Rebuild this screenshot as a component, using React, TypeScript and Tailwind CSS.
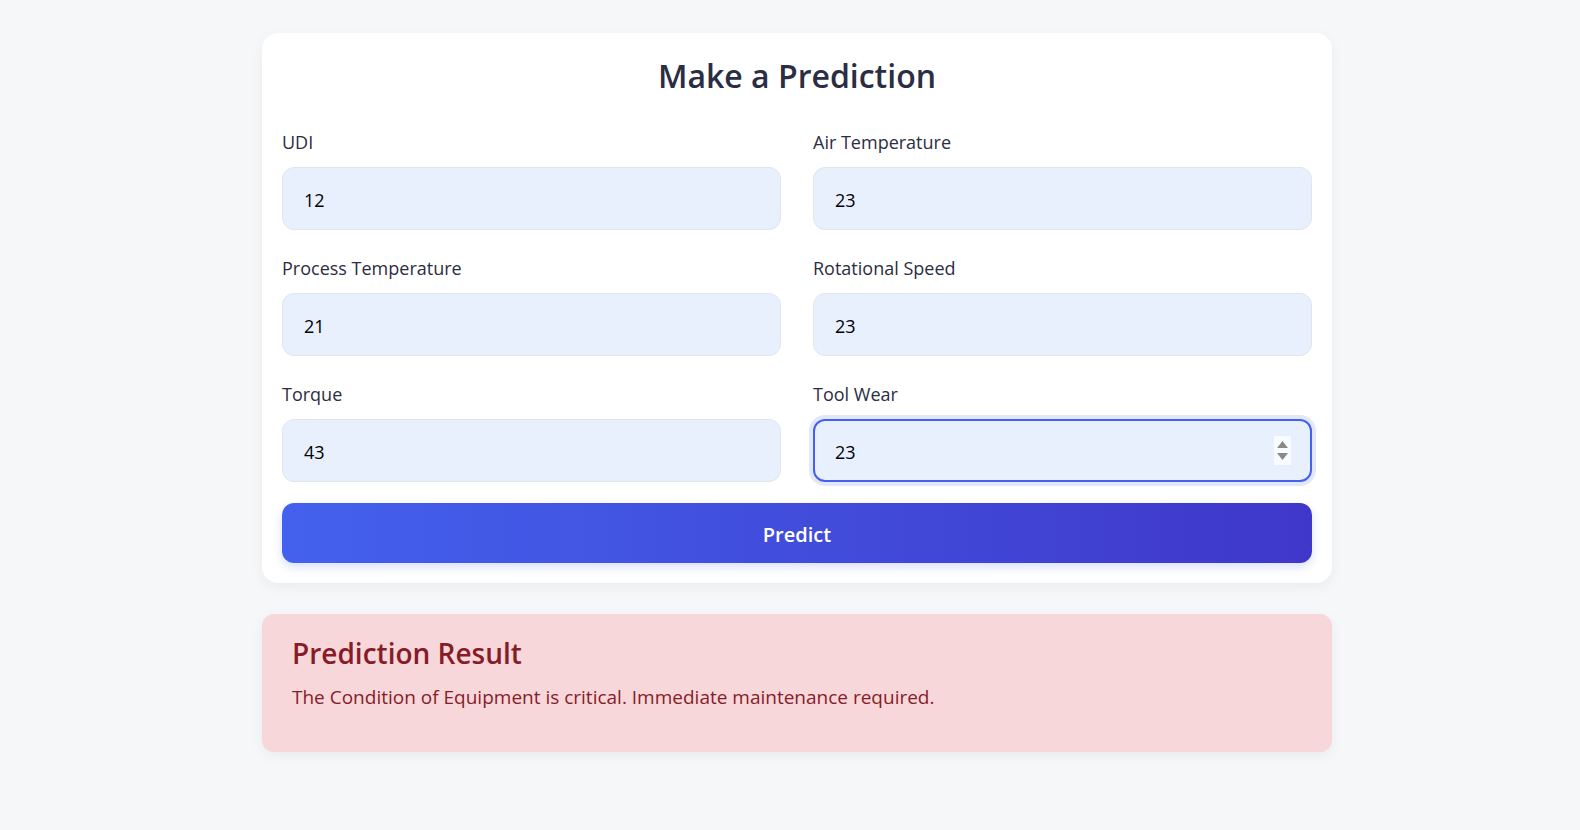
import { useState } from 'react';

const fields = [
  { key: 'udi', label: 'UDI', value: '12' },
  { key: 'air', label: 'Air Temperature', value: '23' },
  { key: 'process', label: 'Process Temperature', value: '21' },
  { key: 'speed', label: 'Rotational Speed', value: '23' },
  { key: 'torque', label: 'Torque', value: '43' },
  { key: 'wear', label: 'Tool Wear', value: '23' },
];

function Spinner() {
  return (
    <div className="flex h-[29px] w-[18px] flex-col items-center justify-center gap-[5px] bg-white/70">
      <svg width="11" height="7" viewBox="0 0 11 7">
        <path d="M5.5 0 L11 7 L0 7 Z" fill="#8a8a8a" />
      </svg>
      <svg width="11" height="7" viewBox="0 0 11 7">
        <path d="M0 0 L11 0 L5.5 7 Z" fill="#8a8a8a" />
      </svg>
    </div>
  );
}

export default function App() {
  const [values, setValues] = useState<Record<string, string>>(
    Object.fromEntries(fields.map((f) => [f.key, f.value]))
  );

  return (
    <div
      className="min-h-[830px] bg-[#f6f7f9] pt-[33px] pl-[14px]"
      style={{ fontFamily: '"Open Sans", "Noto Sans", sans-serif' }}
    >
      <div className="mx-auto w-[1070px]">
        <div className="rounded-[16px] bg-white px-5 pt-5 pb-5 shadow-[0_4px_14px_rgba(0,0,0,0.05)]">
          <h2 className="mb-[30px] text-center text-[32px] leading-[46px] font-semibold text-[#2b2d42]">
            Make a Prediction
          </h2>
          <div className="grid grid-cols-2 gap-x-8 gap-y-[25px]">
            {fields.map((f) => {
              const focused = f.key === 'wear';
              return (
                <div key={f.key} className="flex flex-col">
                  <label className="mb-[11px] text-[18px] leading-[27px] text-[#2b2d42]">{f.label}</label>
                  <div
                    className={
                      focused
                        ? 'flex h-[63px] items-center rounded-[12px] border-2 border-[#4361ee] bg-[#e8f0fe] pr-[19px] pl-[20px] shadow-[0_0_0_4px_rgba(67,97,238,0.15)]'
                        : 'flex h-[63px] items-center rounded-[12px] border border-[#e2e5ea] bg-[#e8f0fe] pr-5 pl-[21px]'
                    }
                  >
                    <input
                      type="text"
                      value={values[f.key]}
                      onChange={(e) => setValues({ ...values, [f.key]: e.target.value })}
                      className="w-full bg-transparent pt-[3px] text-[18px] text-black outline-none"
                      style={{ fontFamily: 'inherit' }}
                    />
                    {focused && <Spinner />}
                  </div>
                </div>
              );
            })}
          </div>
          <button className="mt-[21px] h-[60px] w-full rounded-[12px] bg-gradient-to-r from-[#4361ee] to-[#3f37c9] pt-[3px] text-[20px] font-semibold text-white shadow-[0_4px_10px_rgba(67,97,238,0.2)]">
            Predict
          </button>
        </div>

        <div className="mt-[31px] rounded-[12px] bg-[#f8d7da] px-[30px] pt-6 pb-6 shadow-[0_4px_14px_rgba(0,0,0,0.05)]">
          <h3 className="mb-[15px] text-[28px] leading-[30px] font-semibold text-[#861c28]">Prediction Result</h3>
          <p className="mb-[17px] text-[19px] leading-[28px] text-[#861c28]">
            The Condition of Equipment is critical. Immediate maintenance required.
          </p>
        </div>
      </div>
    </div>
  );
}
